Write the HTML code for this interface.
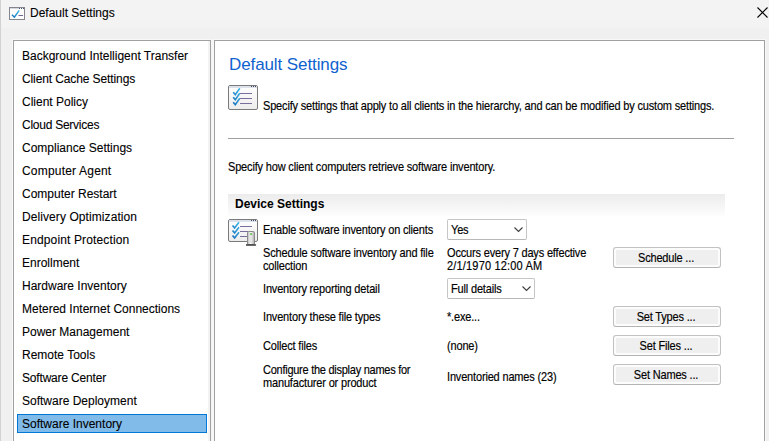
<!DOCTYPE html>
<html><head><meta charset="utf-8">
<style>
html,body{margin:0;padding:0;}
body{width:769px;height:441px;overflow:hidden;background:#f0f0f0;position:relative;font-family:"Liberation Sans",sans-serif;color:#000;}
.a{position:absolute;white-space:nowrap;}
.t12{font-size:12px;line-height:14px;-webkit-text-stroke:0.1px #000;}
.t11{font-size:11px;line-height:13px;letter-spacing:-0.17px;transform:scaleY(1.1);transform-origin:0 0;-webkit-text-stroke:0.15px #000;}
#tb{left:0;top:0;width:769px;height:28px;background:#f3f3f3;}
#edge{left:0;top:0;width:1px;height:441px;background:#d2d2d2;}
#list{left:13px;top:40px;width:196px;height:420px;border:1px solid #a0a0a0;background:#fff;box-shadow:0 0 0 1px #f8f8f8;}
#liststrip{left:208px;top:41px;width:2px;height:400px;background:#f3f3f3;}
#gap{left:211px;top:40px;width:3px;height:401px;background:#f6f6f6;}
#panel{left:214px;top:40px;width:549px;height:420px;border:1px solid #a0a0a0;background:#fff;box-shadow:0 0 0 1px #f8f8f8;}
.li{left:22px;}
#sel{left:17px;top:414px;width:188px;height:17px;border:1px solid #0078d7;background:#80bbe9;}
#hr{left:228px;top:138px;width:506px;height:1px;background:#a0a0a0;}
#band{left:228px;top:194px;width:497px;height:22px;background:linear-gradient(#ececec,#fdfdfd);}
.combo{border:1px solid #c6c6c6;border-bottom-color:#b8b8b8;border-radius:2px;background:#fff;}
.btn{left:613px;width:106px;height:19px;border:1px solid #c2c2c2;border-bottom-color:#b4b4b4;border-radius:3px;background:#efefef;box-shadow:inset 0 0 0 2px #fcfcfc;font-size:11px;line-height:19px;text-align:center;letter-spacing:-0.17px;text-indent:-1px;}
.btn span{display:inline-block;transform:scaleY(1.1);transform-origin:50% 60%;position:relative;top:1px;-webkit-text-stroke:0.15px #000;}
</style></head><body>
<div class="a" id="tb"></div>
<div class="a" id="edge"></div>
<!-- title bar -->
<svg class="a" style="left:9px;top:7px" width="16" height="13" viewBox="0 0 16 13">
  <defs><linearGradient id="ck0" x1="0" y1="1" x2="1" y2="0"><stop offset="0" stop-color="#1670bd"/><stop offset="1" stop-color="#3fb8e8"/></linearGradient></defs>
  <rect x="0.5" y="0.5" width="15" height="12" fill="#fdfdfd" stroke="#85858e"/>
  <rect x="1" y="1" width="9" height="1" fill="#d6d9e2"/>
  <rect x="10" y="1" width="1" height="1" fill="#4a5672"/><rect x="12" y="1" width="1" height="1" fill="#4a5672"/><rect x="14" y="1" width="1" height="1" fill="#4a5672"/>
  <path d="M3 7.8 L5.4 10.2 L10.2 3.4" stroke="url(#ck0)" stroke-width="1.5" fill="none"/>
  <path d="M9.5 8.5 H14" stroke="#6f6790" stroke-width="1"/>
</svg>
<div class="a t12" style="left:30px;top:6px;">Default Settings</div>
<svg class="a" style="left:757px;top:7px" width="11" height="11" viewBox="0 0 11 11">
  <path d="M0.5 0.5 L10.5 10.5 M10.5 0.5 L0.5 10.5" stroke="#000" stroke-width="1.1"/>
</svg>

<!-- left list -->
<div class="a" id="list"></div>
<div class="a" id="liststrip"></div>
<div class="a" id="gap"></div>
<div class="a" id="sel"></div>
<div class="a t12 li" style="top:49px">Background Intelligent Transfer</div>
<div class="a t12 li" style="top:72px;letter-spacing:-0.11px">Client Cache Settings</div>
<div class="a t12 li" style="top:95px">Client Policy</div>
<div class="a t12 li" style="top:118px;letter-spacing:-0.25px">Cloud Services</div>
<div class="a t12 li" style="top:141px">Compliance Settings</div>
<div class="a t12 li" style="top:164px;letter-spacing:0.19px">Computer Agent</div>
<div class="a t12 li" style="top:187px">Computer Restart</div>
<div class="a t12 li" style="top:210px;letter-spacing:0.08px">Delivery Optimization</div>
<div class="a t12 li" style="top:233px;letter-spacing:0.14px">Endpoint Protection</div>
<div class="a t12 li" style="top:256px">Enrollment</div>
<div class="a t12 li" style="top:279px">Hardware Inventory</div>
<div class="a t12 li" style="top:302px">Metered Internet Connections</div>
<div class="a t12 li" style="top:325px">Power Management</div>
<div class="a t12 li" style="top:348px">Remote Tools</div>
<div class="a t12 li" style="top:371px;letter-spacing:-0.18px">Software Center</div>
<div class="a t12 li" style="top:394px">Software Deployment</div>
<div class="a t12 li" style="top:417px">Software Inventory</div>

<!-- right panel -->
<div class="a" id="panel"></div>
<div class="a" style="left:229px;top:55px;font-size:17px;line-height:20px;color:#0f62cf;letter-spacing:-0.1px;">Default Settings</div>
<svg class="a" style="left:228px;top:85px" width="31" height="26" viewBox="0 0 31 26">
  <defs><linearGradient id="wg" x1="0" y1="0" x2="0" y2="1"><stop offset="0" stop-color="#ffffff"/><stop offset="1" stop-color="#ececec"/></linearGradient>
  <linearGradient id="ck" x1="0" y1="1" x2="1" y2="0"><stop offset="0" stop-color="#1670bd"/><stop offset="1" stop-color="#3fb8e8"/></linearGradient></defs>
  <rect x="0.5" y="0.5" width="29" height="24" rx="1.5" fill="url(#wg)" stroke="#7a7a7a"/>
  <rect x="1" y="1" width="28" height="2" fill="#dde2ea"/>
  <rect x="23" y="1" width="1" height="1" fill="#3a4662"/><rect x="25" y="1" width="1" height="1" fill="#3a4662"/><rect x="27" y="1" width="1" height="1" fill="#3a4662"/>
  <path d="M5.2 7.2 L7.3 9.6 L11.8 3.2 M5.2 12.2 L7.3 14.6 L11.8 8.2 M5.2 17.2 L7.3 19.6 L11.8 13.2" stroke="url(#ck)" stroke-width="1.6" fill="none" stroke-linejoin="miter"/>
  <path d="M12 8.5 H24 M12 13.5 H24 M12 18.5 H24" stroke="#7a6e9c" stroke-width="1"/>
</svg>
<div class="a t11" style="left:263px;top:99px;">Specify settings that apply to all clients in the hierarchy, and can be modified by custom settings.</div>
<div class="a" id="hr"></div>
<div class="a t11" style="left:228px;top:160px;">Specify how client computers retrieve software inventory.</div>
<div class="a" id="band"></div>
<div class="a" style="left:235px;top:197px;font-size:12px;line-height:14px;font-weight:bold;">Device Settings</div>

<svg class="a" style="left:228px;top:219px" width="31" height="29" viewBox="0 0 31 29">
  <defs><linearGradient id="wg2" x1="0" y1="0" x2="0" y2="1"><stop offset="0" stop-color="#ffffff"/><stop offset="1" stop-color="#ececec"/></linearGradient>
  <linearGradient id="ck2" x1="0" y1="1" x2="1" y2="0"><stop offset="0" stop-color="#1670bd"/><stop offset="1" stop-color="#3fb8e8"/></linearGradient>
  <linearGradient id="tg" x1="0" y1="0" x2="1" y2="0"><stop offset="0" stop-color="#b8b8b8"/><stop offset="0.45" stop-color="#fbfbfb"/><stop offset="1" stop-color="#a8a8a8"/></linearGradient></defs>
  <rect x="0.5" y="0.5" width="29" height="22" rx="1.5" fill="url(#wg2)" stroke="#7a7a7a"/>
  <rect x="1" y="1" width="28" height="2" fill="#dde2ea"/>
  <rect x="23" y="1" width="1" height="1" fill="#3a4662"/><rect x="25" y="1" width="1" height="1" fill="#3a4662"/><rect x="27" y="1" width="1" height="1" fill="#3a4662"/>
  <path d="M4.5 6.5 L6.6 8.9 L11 3.2 M4.5 11.5 L6.6 13.9 L11 8.2 M4.5 16.5 L6.6 18.9 L11 13.2" stroke="url(#ck2)" stroke-width="1.6" fill="none"/>
  <path d="M12 7.5 H24 M12 12.5 H20 M12 17.5 H20" stroke="#7a6e9c" stroke-width="1"/>
  <path d="M19.5 25.5 V13.8 Q19.5 12.5 20.8 12.5 H25.2 Q26.5 12.5 26.5 13.8 V25.5 Z" fill="url(#tg)" stroke="#8a8a8a"/>
  <rect x="22" y="15" width="2" height="9" fill="#e4e4e4"/>
  <circle cx="23" cy="15" r="1.1" fill="#62c24e"/>
  <path d="M18 26 H28" stroke="#444" stroke-width="1.6"/>
</svg>
<div class="a t11" style="left:263px;top:223px;">Enable software inventory on clients</div>
<div class="a combo" style="left:447px;top:219px;width:78px;height:19px;"></div>
<div class="a t11" style="left:451px;top:223px;">Yes</div>
<svg class="a" style="left:514px;top:227px" width="10" height="6" viewBox="0 0 10 6"><path d="M0.5 0.5 L4.5 4.5 L8.5 0.5" stroke="#3c3c3c" stroke-width="1.1" fill="none"/></svg>

<div class="a t11" style="left:263px;top:247px;line-height:11.82px;">Schedule software inventory and file<br>collection</div>
<div class="a t11" style="left:447px;top:247px;line-height:11.82px;">Occurs every 7 days effective<br><span style="letter-spacing:0.18px">2/1/1970 12:00 AM</span></div>
<div class="a btn" style="top:247px;"><span>Schedule ...</span></div>

<div class="a t11" style="left:263px;top:282px;">Inventory reporting detail</div>
<div class="a combo" style="left:447px;top:278px;width:86px;height:19px;"></div>
<div class="a t11" style="left:451px;top:282px;">Full details</div>
<svg class="a" style="left:522px;top:286px" width="10" height="6" viewBox="0 0 10 6"><path d="M0.5 0.5 L4.5 4.5 L8.5 0.5" stroke="#3c3c3c" stroke-width="1.1" fill="none"/></svg>

<div class="a t11" style="left:263px;top:310px;">Inventory these file types</div>
<div class="a t11" style="left:447px;top:310px;">*.exe...</div>
<div class="a btn" style="top:306px;"><span>Set Types ...</span></div>

<div class="a t11" style="left:263px;top:339px;">Collect files</div>
<div class="a t11" style="left:447px;top:339px;">(none)</div>
<div class="a btn" style="top:335px;"><span>Set Files ...</span></div>

<div class="a t11" style="left:263px;top:363.5px;line-height:11.82px;"><span style="letter-spacing:-0.26px">Configure the display names for</span><br>manufacturer or product</div>
<div class="a t11" style="left:447px;top:370px;">Inventoried names (23)</div>
<div class="a btn" style="top:364px;"><span>Set Names ...</span></div>
</body></html>
